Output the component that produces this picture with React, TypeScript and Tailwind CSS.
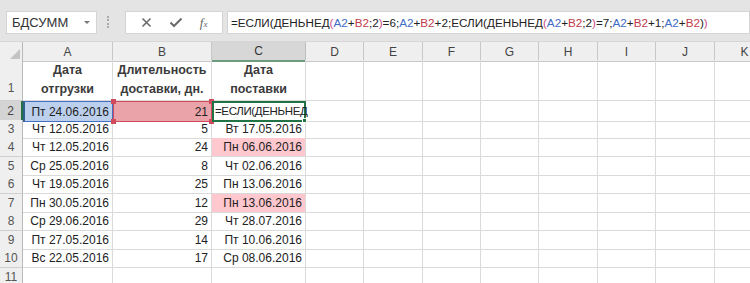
import React from 'react';

const COLS = 'grid grid-cols-[23px_90px_99px_94px_58px_59px_58px_58px_59px_58px_59px_60px]';
const LETTERS = ['A', 'B', 'C', 'D', 'E', 'F', 'G', 'H', 'I', 'J', 'K'];

const rows: [string, string, string, boolean][] = [
  ['Чт 12.05.2016', '5', 'Вт 17.05.2016', false],
  ['Чт 12.05.2016', '24', 'Пн 06.06.2016', true],
  ['Ср 25.05.2016', '8', 'Чт 02.06.2016', false],
  ['Чт 19.05.2016', '25', 'Пн 13.06.2016', false],
  ['Пн 30.05.2016', '12', 'Пн 13.06.2016', true],
  ['Ср 29.06.2016', '29', 'Чт 28.07.2016', false],
  ['Пт 27.05.2016', '14', 'Пт 10.06.2016', false],
  ['Вс 22.05.2016', '17', 'Ср 08.06.2016', false],
];

const K = 'text-[#222]';
const B = 'text-[#3f6cc4]';
const R = 'text-[#c23b4b]';
const P = 'text-[#c9508a]';

const formula: [string, string][] = [
  ['=ЕСЛИ(ДЕНЬНЕД', K], ['(', P], ['A2', B], ['+', K], ['B2', R], [';2', K], [')', P],
  ['=6;', K], ['A2', B], ['+', K], ['B2', R], ['+2;ЕСЛИ(ДЕНЬНЕД', K], ['(', P],
  ['A2', B], ['+', K], ['B2', R], [';2', K], [')', P], ['=7;', K], ['A2', B], ['+', K],
  ['B2', R], ['+1;', K], ['A2', B], ['+', K], ['B2', R], [')', K], [')', P],
];

function Blank({ n }: { n: number }) {
  return (
    <>
      {Array.from({ length: n }).map((_, i) => (
        <div key={i} className="border-r border-b border-[#dadada]" />
      ))}
    </>
  );
}

function RowHead({ n, active }: { n: number; active?: boolean }) {
  return (
    <div
      className={
        active
          ? 'flex items-center justify-center bg-[#d4d4d4] border-b border-[#b9b9b9] border-r-2 border-r-[#217346] text-[12px] text-[#444]'
          : 'flex items-center justify-center bg-[#efefef] border-b border-[#cfcfcf] border-r border-r-[#b9b9b9] text-[12px] text-[#555]'
      }
    >
      {n}
    </div>
  );
}

export default function App() {
  return (
    <div className="w-[750px] h-[283px] overflow-hidden bg-white font-['Liberation_Sans',Arial,sans-serif]">
      {/* formula bar */}
      <div className="h-[42px] bg-[#e4e4e4] border-b border-[#d6d6d6] flex items-start pt-[11px]">
        <div className="ml-[6px] w-[91px] h-[23px] bg-white border border-[#d4d4d4] flex items-center justify-between pl-[5px] pr-[6px]">
          <span className="text-[13px] text-[#333]">БДСУММ</span>
          <span className="w-0 h-0 border-l-[3px] border-r-[3px] border-t-[3px] border-l-transparent border-r-transparent border-t-[#777]" />
        </div>
        <div className="ml-[10px] mt-[5px] h-[12px] w-[2px] border-l-2 border-dotted border-[#aaa]" />
        <div className="ml-[16px] w-[98px] h-[23px] bg-white border border-[#d4d4d4] flex items-center justify-around px-[6px]">
          <svg width="11" height="11" viewBox="0 0 11 11">
            <path d="M1.5 1.5 L9.5 9.5 M9.5 1.5 L1.5 9.5" stroke="#6b6b6b" strokeWidth="1.6" />
          </svg>
          <svg width="14" height="11" viewBox="0 0 14 11">
            <path d="M1.5 5.5 L5 9 L12.5 1.5" stroke="#6b6b6b" strokeWidth="2" fill="none" />
          </svg>
          <span className="font-['Liberation_Serif',serif] italic text-[13px] text-[#666] leading-none">
            f<span className="text-[9px]">x</span>
          </span>
        </div>
        <div className="ml-[4px] flex-1 h-[23px] bg-white border border-[#d4d4d4] flex items-center pl-[3px] text-[11.7px] whitespace-nowrap overflow-hidden">
          {formula.map(([t, c], i) => (
            <span key={i} className={c}>
              {t}
            </span>
          ))}
        </div>
      </div>

      {/* column headers */}
      <div className={`${COLS} h-[18px]`}>
        <div className="flex items-end justify-end pr-[2px] pb-[2px] bg-[#efefef] border-r border-b border-[#b9b9b9]">
          <svg width="10" height="10" viewBox="0 0 10 10">
            <path d="M10 0 L10 10 L0 10 Z" fill="#c3c3c3" />
          </svg>
        </div>
        {LETTERS.map((l) => (
          <div
            key={l}
            className={
              l === 'C'
                ? 'flex items-center justify-center bg-[#d7d7d7] border-r border-[#bdbdbd] border-b-2 border-b-[#6f9c80] text-[12px] text-[#333]'
                : 'flex items-center justify-center bg-[#efefef] border-r border-b border-[#c8c8c8] text-[12px] text-[#444]'
            }
          >
            {l}
          </div>
        ))}
      </div>

      {/* row 1 */}
      <div className={`${COLS} h-[41px]`}>
        <div className="flex items-end justify-center pb-[3px] bg-[#efefef] border-b border-[#cfcfcf] border-r border-r-[#b9b9b9] text-[12px] text-[#555]">
          1
        </div>
        {[
          ['Дата', 'отгрузки'],
          ['Длительность', 'доставки, дн.'],
          ['Дата', 'поставки'],
        ].map(([a, b], i) => (
          <div
            key={i}
            className="flex flex-col items-center justify-center border-r border-b border-[#dadada] font-bold text-[12.5px] leading-[19px] text-[#3b3b3b]"
          >
            <span>{a}</span>
            <span>{b}</span>
          </div>
        ))}
        <Blank n={8} />
      </div>

      {/* row 2 */}
      <div className={`${COLS} h-[18.5px]`}>
        <RowHead n={2} active />
        <div className="flex items-center justify-end pr-[3px] bg-[#bcd0ee] border border-[#4470c4] border-l-2 border-l-[#2f5f8a] text-[12px] text-[#222]">
          Пт 24.06.2016
        </div>
        <div className="relative flex items-center justify-end pr-[3px] bg-[#e9a3a9] border border-[#d14b5c] text-[12px] text-[#222]">
          21
          <span className="absolute -left-[3px] -top-[3px] w-[5px] h-[5px] bg-[#d14b5c]" />
          <span className="absolute -right-[3px] -top-[3px] w-[5px] h-[5px] bg-[#d14b5c]" />
          <span className="absolute -left-[3px] -bottom-[3px] w-[5px] h-[5px] bg-[#d14b5c]" />
          <span className="absolute -right-[3px] -bottom-[3px] w-[5px] h-[5px] bg-[#d14b5c]" />
        </div>
        <div className="relative flex items-center pl-[1px] border-2 border-[#217346] text-[11.5px] tracking-[-0.35px] text-[#222] whitespace-nowrap">
          <span>=ЕСЛИ(ДЕНЬНЕД</span>
          <span className="absolute -right-[3px] -bottom-[3px] w-[5px] h-[5px] bg-[#217346] border border-white" />
        </div>
        <Blank n={8} />
      </div>

      {/* data rows */}
      {rows.map(([a, b, c, pink], i) => (
        <div key={i} className={`${COLS} h-[18.5px]`}>
          <RowHead n={i + 3} />
          <div className="flex items-center justify-end pr-[3px] border-r border-b border-[#dadada] text-[12px] text-[#222]">{a}</div>
          <div className="flex items-center justify-end pr-[3px] border-r border-b border-[#dadada] text-[12px] text-[#222]">{b}</div>
          <div
            className={
              pink
                ? 'flex items-center justify-end pr-[3px] bg-[#ffc7ce] border-r border-b border-[#dadada] text-[12px] text-[#222]'
                : 'flex items-center justify-end pr-[3px] border-r border-b border-[#dadada] text-[12px] text-[#222]'
            }
          >
            {c}
          </div>
          <Blank n={8} />
        </div>
      ))}

      {/* row 11 */}
      <div className={`${COLS} h-[18.5px]`}>
        <RowHead n={11} />
        <Blank n={11} />
      </div>
    </div>
  );
}
